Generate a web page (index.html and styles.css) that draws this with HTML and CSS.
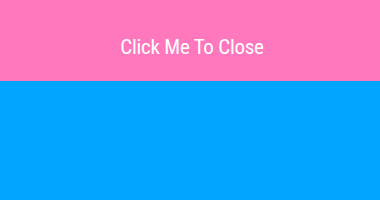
FILE: index.html
```html
<!DOCTYPE html>
<html lang="en">
<head>
  <meta charset="UTF-8">
  <title>Close Banner</title>
  <link rel="stylesheet" href="styles.css">
</head>
<body>
  <div class="banner">
    <button class="close-btn">Click Me To Close</button>
  </div>
  <div class="content"></div>
</body>
</html>
```

FILE: styles.css
```css
html, body {
  height: 100%;
}
body {
  margin: 0;
  display: flex;
  flex-direction: column;
  font-family: Roboto, 'Noto Sans', sans-serif;
  background: #00a6ff;
}
.banner {
  height: 81px;
  box-sizing: border-box;
  padding-top: 12px;
  background: #ff77bc;
  display: flex;
  align-items: center;
  justify-content: center;
}
.close-btn {
  background: none;
  border: none;
  color: #fff;
  font-family: inherit;
  font-size: 21px;
  font-stretch: condensed;
  letter-spacing: -0.25px;
  margin-left: 4px;
  padding: 0;
  cursor: pointer;
}
.content {
  flex: 1;
  background: #00a6ff;
}
```
